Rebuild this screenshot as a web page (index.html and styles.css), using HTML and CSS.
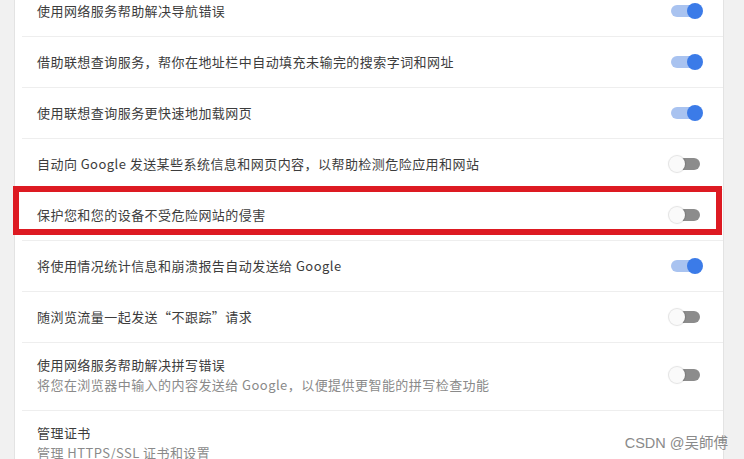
FILE: index.html
```html
<!DOCTYPE html>
<html lang="zh-CN">
<head>
<meta charset="utf-8">
<title>隐私设置</title>
<link rel="stylesheet" href="styles.css">
</head>
<body>
<div class="page">
  <div class="card">
    <div class="row"><div class="label">使用网络服务帮助解决导航错误</div><span class="toggle on"></span></div>
    <div class="row"><div class="label">借助联想查询服务，帮你在地址栏中自动填充未输完的搜索字词和网址</div><span class="toggle on"></span></div>
    <div class="row"><div class="label">使用联想查询服务更快速地加载网页</div><span class="toggle on"></span></div>
    <div class="row"><div class="label">自动向 Google 发送某些系统信息和网页内容，以帮助检测危险应用和网站</div><span class="toggle"></span></div>
    <div class="row marked"><div class="label">保护您和您的设备不受危险网站的侵害</div><span class="toggle"></span></div>
    <div class="row"><div class="label">将使用情况统计信息和崩溃报告自动发送给 Google</div><span class="toggle on"></span></div>
    <div class="row"><div class="label">随浏览流量一起发送“不跟踪”请求</div><span class="toggle"></span></div>
    <div class="row tall"><div class="label">使用网络服务帮助解决拼写错误<div class="sub">将您在浏览器中输入的内容发送给 Google，以便提供更智能的拼写检查功能</div></div><span class="toggle"></span></div>
    <div class="row tall"><div class="label">管理证书<div class="sub">管理 HTTPS/SSL 证书和设置</div></div></div>
  </div>
</div>
<div class="watermark">CSDN @吴師傅</div>
</body>
</html>
```
FILE: styles.css
```css
html, body {
  margin: 0;
  padding: 0;
  height: 459px;
  overflow: hidden;
}
body {
  background: #f1f1f1;
  font-family: "Noto Sans CJK SC", "Liberation Sans", sans-serif;
  position: relative;
}
.page {
  padding: 0 20px 0 14px;
  height: 459px;
  overflow: hidden;
}
.card {
  background: #fff;
  border-left: 1px solid #e3e3e3;
  border-right: 1px solid #e3e3e3;
  margin-top: -14px;
  padding-left: 7px;
  min-height: 520px;
}
.row {
  display: flex;
  align-items: center;
  justify-content: space-between;
  height: 50px;
  border-bottom: 1px solid #eeeeee;
  padding: 0 20px 0 15px;
  box-sizing: content-box;
  position: relative;
}
.row.tall {
  height: auto;
  padding-top: 12px;
  padding-bottom: 15px;
}
.label {
  font-size: 13px;
  letter-spacing: 0.45px;
  color: #3c3c3c;
  line-height: 20px;
  white-space: nowrap;
}
.sub {
  color: #8a8a8a;
}
.toggle {
  position: relative;
  width: 34px;
  height: 16px;
  flex: none;
}
.toggle::before {
  content: "";
  position: absolute;
  left: 2px;
  right: 3px;
  top: 2px;
  height: 12px;
  border-radius: 6px;
  background: #8c8c8c;
}
.toggle::after {
  content: "";
  position: absolute;
  left: 0;
  top: 0;
  width: 16px;
  height: 16px;
  border-radius: 50%;
  background: #fafafa;
  box-shadow: 0 0 1px 1px rgba(0,0,0,0.12);
}
.toggle.on::before {
  background: #a9c3f0;
}
.toggle.on::after {
  left: auto;
  right: 0;
  background: #3b7be8;
  box-shadow: none;
}
.row.marked::after {
  content: "";
  position: absolute;
  left: -9px;
  right: 1px;
  top: -4px;
  bottom: 5px;
  border: 6px solid #dd1a22;
  pointer-events: none;
}
.watermark {
  position: absolute;
  right: 16px;
  bottom: 7px;
  font-family: "Liberation Sans", "Noto Sans CJK SC", sans-serif;
  font-size: 14.5px;
  color: #8a8a8a;
  text-shadow: 0 0 2px #fff;
}
```
